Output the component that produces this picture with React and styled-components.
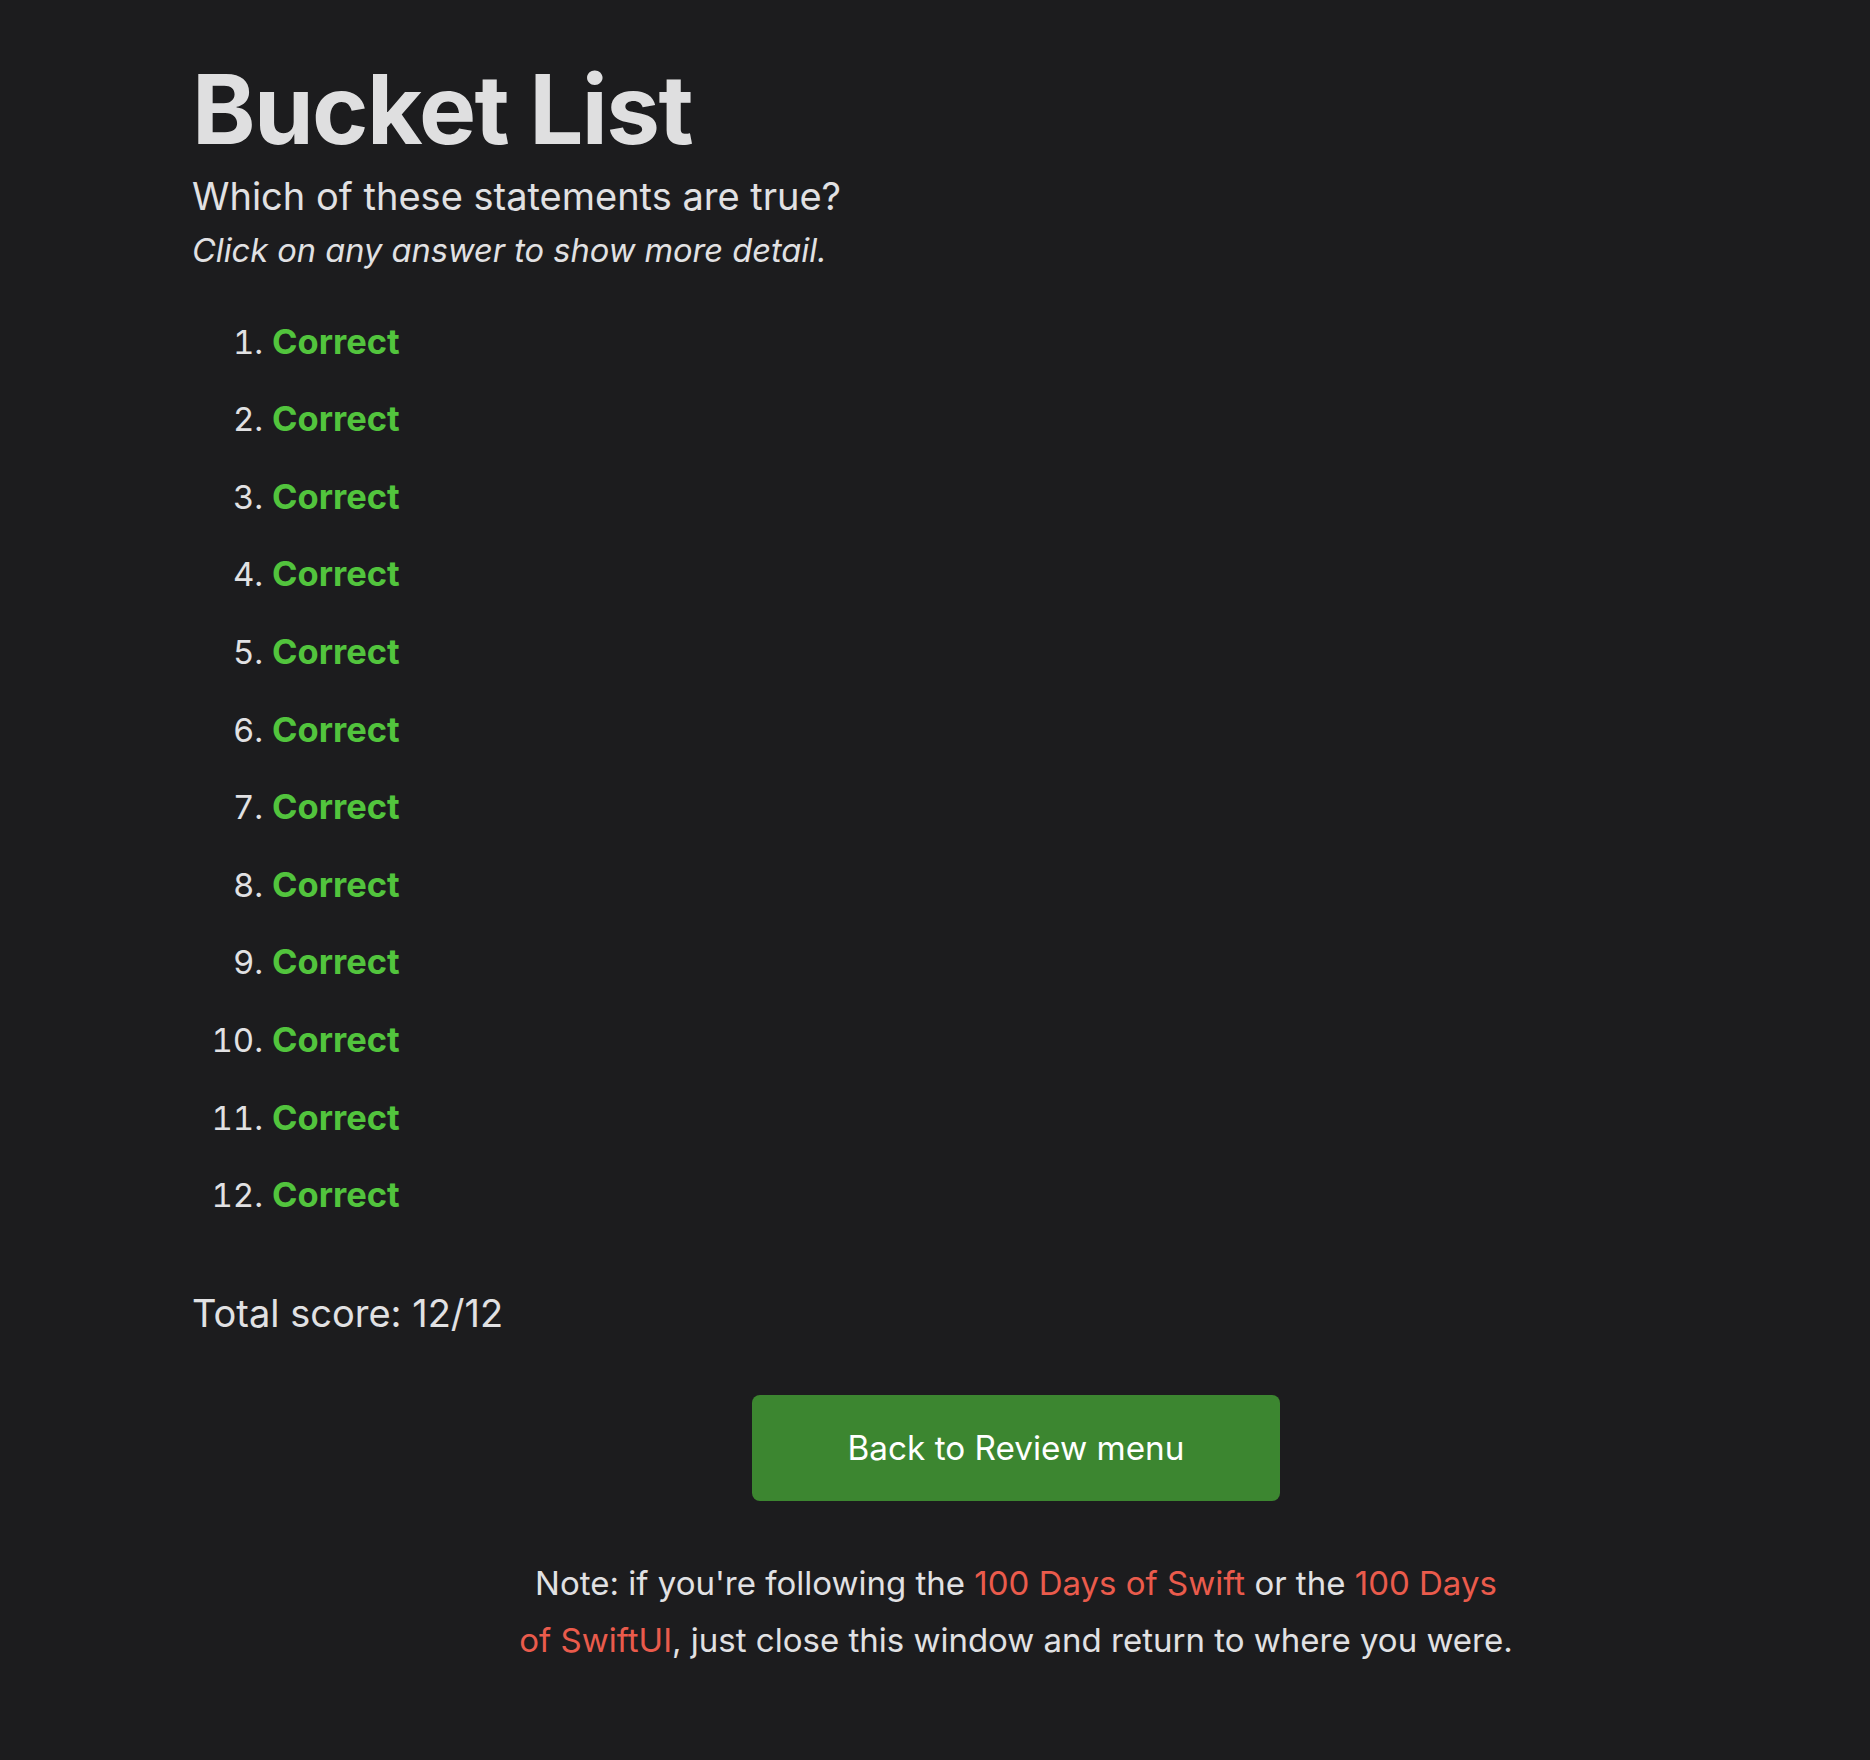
import React from 'react'
import styled, { createGlobalStyle } from 'styled-components'

const GlobalStyle = createGlobalStyle`
  html, body {
    margin: 0;
    padding: 0;
    background: #1c1c1e;
  }
  body {
    font-family: Inter, "Noto Sans", "Liberation Sans", sans-serif;
    color: #e1e1e3;
  }
`

const Page = styled.main`
  box-sizing: border-box;
  min-height: 1760px;
  padding: 57px 30px 80px 192px;
`

const Title = styled.h1`
  margin: 0;
  font-size: 96px;
  line-height: 1.1;
  font-weight: 700;
  letter-spacing: -1.6px;
  color: #dfdfe0;
`

const Question = styled.h2`
  margin: 8px 0 0;
  font-size: 38px;
  line-height: 50px;
  font-weight: 400;
`

const Hint = styled.p`
  margin: 5px 0 0;
  font-size: 32.6px;
  line-height: 48px;
  font-style: italic;
`

const Answers = styled.ol`
  margin: 40px 0 0;
  padding-left: 80px;
  font-size: 33px;
  line-height: 57.6px;
`

const Answer = styled.li`
  margin-bottom: 20px;
  &:last-child {
    margin-bottom: 0;
  }
`

const Verdict = styled.strong`
  font-weight: 700;
  font-size: 34.5px;
  line-height: 1;
  color: ${({ $correct }) => ($correct ? '#52c43d' : '#e8594a')};
`

const Score = styled.p`
  margin: 61px 0 0;
  font-size: 38px;
  line-height: 55px;
`

const Actions = styled.div`
  display: flex;
  justify-content: center;
  margin-top: 54px;
`

const Button = styled.button`
  width: 528px;
  height: 106px;
  border: none;
  border-radius: 8px;
  background: #3c8630;
  color: #ffffff;
  font-family: inherit;
  font-size: 33.3px;
  cursor: pointer;
`

const Note = styled.p`
  max-width: 1000px;
  margin: 54px auto 0;
  text-align: center;
  font-size: 33px;
  line-height: 57.6px;
`

const Link = styled.a`
  color: #ea5b4c;
  text-decoration: none;
`

const results = Array.from({ length: 12 }, () => true)

export default function App() {
  return (
    <>
      <GlobalStyle />
      <Page>
        <Title>Bucket List</Title>
        <Question>Which of these statements are true?</Question>
        <Hint>Click on any answer to show more detail.</Hint>
        <Answers>
          {results.map((ok, i) => (
            <Answer key={i}>
              <Verdict $correct={ok}>{ok ? 'Correct' : 'Wrong'}</Verdict>
            </Answer>
          ))}
        </Answers>
        <Score>Total score: 12/12</Score>
        <Actions>
          <Button>Back to Review menu</Button>
        </Actions>
        <Note>
          Note: if you're following the <Link href="#">100 Days of Swift</Link> or the{' '}
          <Link href="#">100 Days of SwiftUI</Link>, just close this window and return to where you were.
        </Note>
      </Page>
    </>
  )
}
